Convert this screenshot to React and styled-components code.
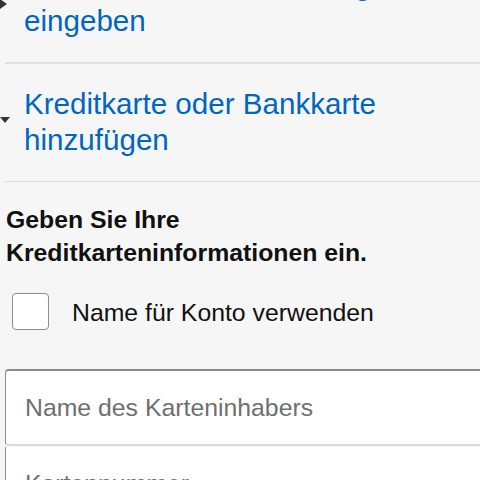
import React from "react";
import styled, { createGlobalStyle } from "styled-components";

const GlobalStyle = createGlobalStyle`
  html, body {
    margin: 0;
    padding: 0;
    background: #f6f6f6;
    overflow: hidden;
  }
  body {
    font-family: "Liberation Sans", Arial, sans-serif;
  }
`;

const Page = styled.div`
  width: 480px;
  height: 480px;
  overflow: hidden;
  background: #f6f6f6;
`;

const Inner = styled.div`
  margin-top: -55px;
`;

const SectionRow = styled.div`
  display: flex;
  align-items: center;
  padding: 22px 0 23px;
`;

const CaretCol = styled.div`
  width: 24px;
  flex: 0 0 24px;
  display: flex;
  align-items: center;
`;

const CaretRight = styled.span`
  width: 0;
  height: 0;
  border-top: 5.5px solid transparent;
  border-bottom: 5.5px solid transparent;
  border-left: 7px solid #333;
  margin-top: 2px;
`;

const CaretDown = styled.span`
  width: 0;
  height: 0;
  border-left: 5.5px solid transparent;
  border-right: 5.5px solid transparent;
  border-top: 6px solid #333;
  margin-top: -3px;
`;

const SectionLink = styled.a`
  color: #0066c0;
  font-size: 29.6px;
  line-height: 36px;
  text-decoration: none;
  cursor: pointer;
`;

const Divider = styled.div`
  margin-left: 5px;
  height: 1.5px;
  background: #dedede;
`;

const Form = styled.div`
  padding: 21px 0 0 6px;
`;

const Heading = styled.h2`
  margin: 0;
  font-size: 24.8px;
  line-height: 33px;
  font-weight: bold;
  color: #111;
`;

const CheckRow = styled.label`
  display: flex;
  align-items: center;
  gap: 23px;
  margin: 24px 0 0 6px;
  cursor: pointer;
`;

const CheckBox = styled.span`
  box-sizing: border-box;
  width: 37px;
  height: 37px;
  flex: 0 0 37px;
  border: 1.5px solid #8d8d8d;
  border-radius: 4px;
  background: #fff;
`;

const CheckLabel = styled.span`
  font-size: 24.8px;
  color: #111;
  padding-top: 3px;
`;

const InputStack = styled.div`
  margin: 39px -40px 0 -1px;
  display: flex;
  flex-direction: column;
`;

const TextInput = styled.div`
  box-sizing: border-box;
  height: ${(p) => (p.$first ? "77px" : "80px")};
  background: #fff;
  border-left: 1.5px solid #8d8d8d;
  border-top: ${(p) => (p.$first ? "2px solid #8a8a8a" : "none")};
  border-bottom: ${(p) => (p.$first ? "2px solid #dcdcdc" : "none")};
  border-radius: ${(p) => (p.$first ? "4px 0 0 4px" : "0")};
  margin-top: ${(p) => (p.$first ? "0" : "1px")};
  display: flex;
  align-items: ${(p) => (p.$first ? "center" : "flex-start")};
  padding: ${(p) => (p.$first ? "0 0 0 19px" : "23px 0 0 19px")};
`;

const Placeholder = styled.span`
  font-size: 24.8px;
  color: #6f6f6f;
  line-height: 28px;
`;

export default function App() {
  return (
    <Page>
      <GlobalStyle />
      <Inner>
        <SectionRow>
          <CaretCol>
            <CaretRight />
          </CaretCol>
          <SectionLink>
            Deutsche Bankverbindung
            <br />
            eingeben
          </SectionLink>
        </SectionRow>
        <Divider />
        <SectionRow>
          <CaretCol>
            <CaretDown />
          </CaretCol>
          <SectionLink>
            Kreditkarte oder Bankkarte
            <br />
            hinzufügen
          </SectionLink>
        </SectionRow>
        <Divider />
        <Form>
          <Heading>
            Geben Sie Ihre
            <br />
            Kreditkarteninformationen ein.
          </Heading>
          <CheckRow>
            <CheckBox />
            <CheckLabel>Name für Konto verwenden</CheckLabel>
          </CheckRow>
          <InputStack>
            <TextInput $first>
              <Placeholder>Name des Karteninhabers</Placeholder>
            </TextInput>
            <TextInput>
              <Placeholder>Kartennummer</Placeholder>
            </TextInput>
          </InputStack>
        </Form>
      </Inner>
    </Page>
  );
}
